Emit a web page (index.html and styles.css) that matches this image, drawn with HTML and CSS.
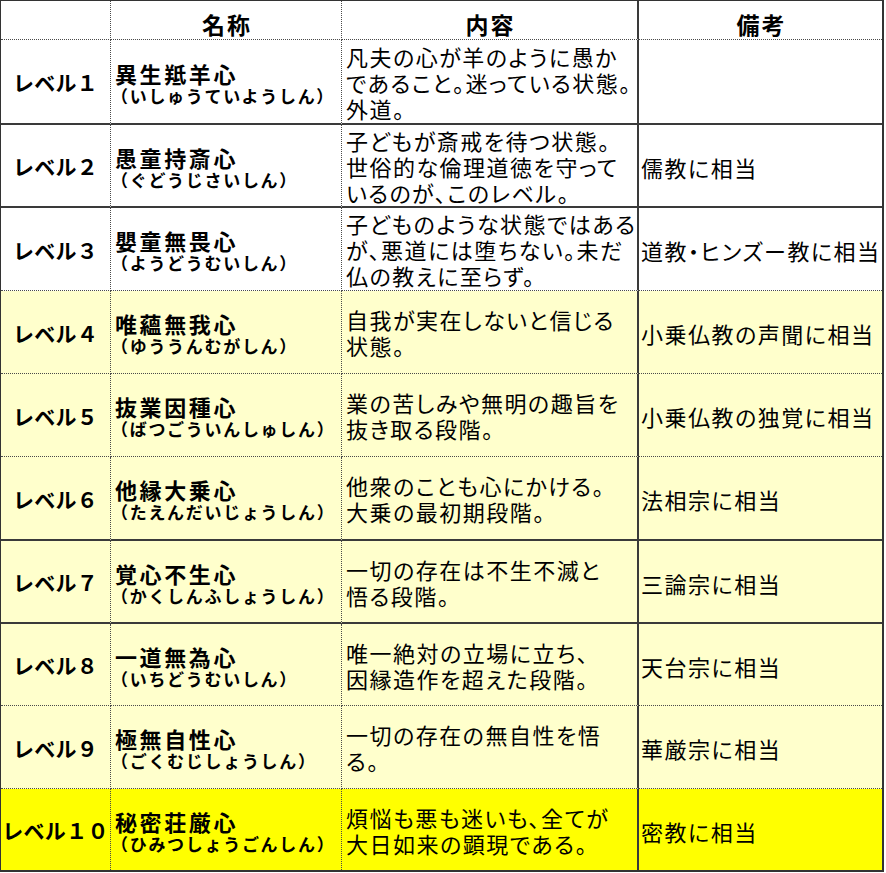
FILE: index.html
```html
<!DOCTYPE html>
<html lang="ja">
<head>
<meta charset="utf-8">
<title>十住心</title>
<link rel="stylesheet" href="styles.css">
</head>
<body>
<div class="sheet">
  <div class="row head dot">
    <div class="cell c1"></div>
    <div class="cell c2 th">名称</div>
    <div class="cell c3 th">内容</div>
    <div class="cell c4 th">備考</div>
  </div>

  <div class="row solid">
    <div class="cell c1 lvl">レベル１</div>
    <div class="cell c2 nm"><span class="name">異生羝羊心</span><span class="read">（いしゅうていようしん）</span></div>
    <div class="cell c3 txt">凡夫の心が羊のように愚か<br>であること。迷っている状態。<br>外道。</div>
    <div class="cell c4 rmk"></div>
  </div>

  <div class="row solid">
    <div class="cell c1 lvl">レベル２</div>
    <div class="cell c2 nm"><span class="name">愚童持斎心</span><span class="read">（ぐどうじさいしん）</span></div>
    <div class="cell c3 txt">子どもが斎戒を待つ状態。<br>世俗的な倫理道徳を守って<br>いるのが、このレベル。</div>
    <div class="cell c4 rmk">儒教に相当</div>
  </div>

  <div class="row dot">
    <div class="cell c1 lvl">レベル３</div>
    <div class="cell c2 nm"><span class="name">嬰童無畏心</span><span class="read">（ようどうむいしん）</span></div>
    <div class="cell c3 txt">子どものような状態ではある<br>が、悪道には堕ちない。未だ<br>仏の教えに至らず。</div>
    <div class="cell c4 rmk">道教・ヒンズー教に相当</div>
  </div>

  <div class="row dot pale">
    <div class="cell c1 lvl">レベル４</div>
    <div class="cell c2 nm"><span class="name">唯蘊無我心</span><span class="read">（ゆううんむがしん）</span></div>
    <div class="cell c3 txt">自我が実在しないと信じる<br>状態。</div>
    <div class="cell c4 rmk">小乗仏教の声聞に相当</div>
  </div>

  <div class="row dot pale">
    <div class="cell c1 lvl">レベル５</div>
    <div class="cell c2 nm"><span class="name">抜業因種心</span><span class="read">（ばつごういんしゅしん）</span></div>
    <div class="cell c3 txt">業の苦しみや無明の趣旨を<br>抜き取る段階。</div>
    <div class="cell c4 rmk">小乗仏教の独覚に相当</div>
  </div>

  <div class="row solid pale">
    <div class="cell c1 lvl">レベル６</div>
    <div class="cell c2 nm"><span class="name">他縁大乗心</span><span class="read">（たえんだいじょうしん）</span></div>
    <div class="cell c3 txt">他衆のことも心にかける。<br>大乗の最初期段階。</div>
    <div class="cell c4 rmk">法相宗に相当</div>
  </div>

  <div class="row solid pale">
    <div class="cell c1 lvl">レベル７</div>
    <div class="cell c2 nm"><span class="name">覚心不生心</span><span class="read">（かくしんふしょうしん）</span></div>
    <div class="cell c3 txt">一切の存在は不生不滅と<br>悟る段階。</div>
    <div class="cell c4 rmk">三論宗に相当</div>
  </div>

  <div class="row dot pale">
    <div class="cell c1 lvl">レベル８</div>
    <div class="cell c2 nm"><span class="name">一道無為心</span><span class="read">（いちどうむいしん）</span></div>
    <div class="cell c3 txt">唯一絶対の立場に立ち、<br>因縁造作を超えた段階。</div>
    <div class="cell c4 rmk">天台宗に相当</div>
  </div>

  <div class="row dot pale">
    <div class="cell c1 lvl">レベル９</div>
    <div class="cell c2 nm"><span class="name">極無自性心</span><span class="read">（ごくむじしょうしん）</span></div>
    <div class="cell c3 txt">一切の存在の無自性を悟<br>る。</div>
    <div class="cell c4 rmk">華厳宗に相当</div>
  </div>

  <div class="row last bright">
    <div class="cell c1 lvl">レベル１０</div>
    <div class="cell c2 nm"><span class="name">秘密荘厳心</span><span class="read">（ひみつしょうごんしん）</span></div>
    <div class="cell c3 txt">煩悩も悪も迷いも、全てが<br>大日如来の顕現である。</div>
    <div class="cell c4 rmk">密教に相当</div>
  </div>
</div>
</body>
</html>
```
FILE: styles.css
```css
html, body {
  margin: 0;
  padding: 0;
  background: #ffffff;
}

body {
  font-family: "Noto Sans CJK JP", "Noto Sans", sans-serif;
  color: #000;
}

.sheet {
  width: 884px;
  box-sizing: border-box;
  border-top: 1px solid #333;
  border-left: 1px solid #333;
  border-right: 2px solid #333;
  border-bottom: 2px solid #333;
  display: grid;
  grid-template-columns: 110px 231px 297px 1fr;
  grid-template-rows: 39px 85px 83px 83px 83px 83px 84px 83px 82px 83px 81px;
  background: #fff;
}

.row {
  display: contents;
}

.cell {
  box-sizing: border-box;
  display: flex;
  flex-direction: column;
  justify-content: center;
  overflow: visible;
  white-space: nowrap;
  background: #fff;
}

.pale > .cell { background: #ffffcc; }
.bright > .cell { background: #ffff00; }

.dot > .cell { border-bottom: 1px dotted #4a4a4a; }
.solid > .cell { border-bottom: 2px solid #3a3a3a; }
.last > .cell { border-bottom: none; }

.c1, .c2 { border-right: 1px dotted #4a4a4a; }
.c3 { border-right: 2px solid #3a3a3a; }

.th {
  align-items: center;
  font-size: 23px;
  font-weight: bold;
  line-height: 28px;
  letter-spacing: 2px;
  padding-top: 7px;
  padding-left: 2px;
}

.lvl {
  align-items: center;
  font-size: 21px;
  font-weight: bold;
  line-height: 26px;
  letter-spacing: 0.3px;
  padding-top: 1px;
}

.nm {
  padding-left: 4px;
  padding-top: 4px;
}

.name {
  font-size: 22px;
  font-weight: bold;
  letter-spacing: 2.6px;
  line-height: 24px;
}

.read {
  font-size: 17px;
  font-weight: bold;
  letter-spacing: 1.7px;
  line-height: 22px;
  margin-left: -4px;
}

.txt {
  padding: 0 0 0 4px;
  font-size: 22px;
  line-height: 26px;
  letter-spacing: 1.5px;
  font-feature-settings: "palt";
}

.rmk {
  padding-left: 2px;
  padding-top: 2px;
  font-size: 22px;
  line-height: 26px;
  letter-spacing: 1.5px;
  font-feature-settings: "palt";
}
```
